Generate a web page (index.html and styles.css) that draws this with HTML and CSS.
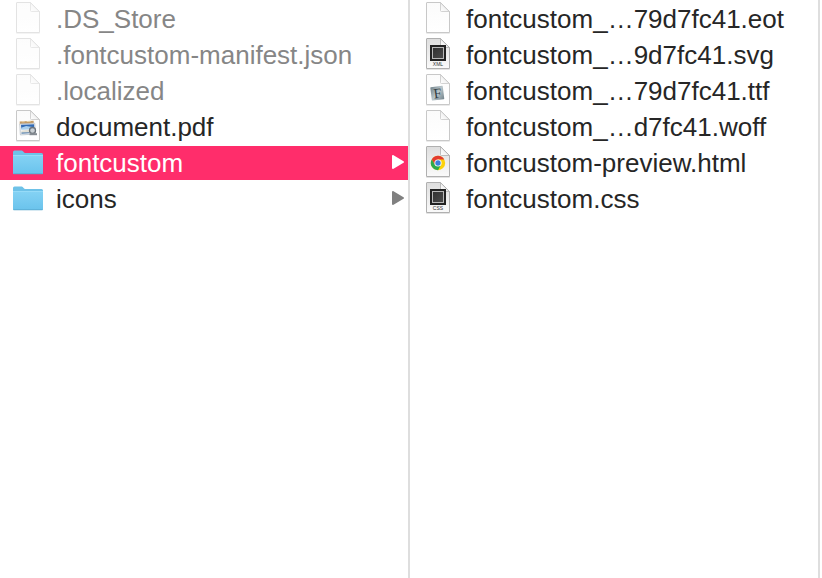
FILE: index.html
```html
<!DOCTYPE html>
<html lang="en">
<head>
    <meta charset="UTF-8">
    <meta name="viewport" content="width=device-width, initial-scale=1.0">
    <title>fontcustom</title>
    <link rel="stylesheet" href="styles.css">
</head>
<body>
    <!-- Shared icon shapes -->
    <svg class="icon-defs" width="0" height="0" aria-hidden="true">
        <defs>
            <linearGradient id="paper" x1="0" y1="0" x2="0" y2="1">
                <stop offset="0" stop-color="#fbfbfb"/>
                <stop offset="1" stop-color="#ffffff"/>
            </linearGradient>
            <linearGradient id="grayPaper" x1="0" y1="0" x2="0" y2="1">
                <stop offset="0" stop-color="#dedede"/>
                <stop offset="1" stop-color="#fafafa"/>
            </linearGradient>
            <linearGradient id="fold" x1="0" y1="1" x2="1" y2="0">
                <stop offset="0" stop-color="#ffffff"/>
                <stop offset="0.4" stop-color="#f4f4f4"/>
                <stop offset="0.5" stop-color="#d8d8d8"/>
                <stop offset="0.6" stop-color="#ffffff"/>
            </linearGradient>
            <linearGradient id="folderFront" x1="0" y1="0" x2="0" y2="1">
                <stop offset="0" stop-color="#84d2f4"/>
                <stop offset="1" stop-color="#6ac3ec"/>
            </linearGradient>
            <linearGradient id="plate" x1="0" y1="0" x2="1" y2="1">
                <stop offset="0" stop-color="#6f8088"/>
                <stop offset="0.5" stop-color="#b9c6cb"/>
                <stop offset="1" stop-color="#71828a"/>
            </linearGradient>
            <linearGradient id="screen" x1="0" y1="0" x2="1" y2="1">
                <stop offset="0" stop-color="#303030"/>
                <stop offset="1" stop-color="#4b4b4b"/>
            </linearGradient>
        </defs>
        <symbol id="file" viewBox="0 0 32 34">
            <path d="M4.5 1.5h14l9 9v20.7h-23z" fill="none" stroke="#000" stroke-opacity=".12"/>
            <path d="M5 .5h13.5l9 9V30a.5.5 0 0 1-.5.5H5a.5.5 0 0 1-.5-.5V1A.5.5 0 0 1 5 .5z" fill="url(#paper)" stroke="#c8c8c8"/>
            <path d="M18.5 .5v8a1 1 0 0 0 1 1h8z" fill="url(#fold)" stroke="#c8c8c8" stroke-width=".8"/>
        </symbol>
        <symbol id="code" viewBox="0 0 32 34">
            <path d="M4.5 1.5h14l9 9v20.7h-23z" fill="none" stroke="#000" stroke-opacity=".16"/>
            <path d="M5 .5h13.5l9 9V30a.5.5 0 0 1-.5.5H5a.5.5 0 0 1-.5-.5V1A.5.5 0 0 1 5 .5z" fill="url(#grayPaper)" stroke="#b0b0b0"/>
            <path d="M18.5 .5v8a1 1 0 0 0 1 1h8z" fill="url(#fold)" stroke="#b0b0b0" stroke-width=".8"/>
            <rect x="8" y="7" width="16" height="16" fill="#222"/>
            <rect x="10.5" y="9.5" width="11" height="11" fill="url(#screen)" stroke="#b8b8b8"/>
        </symbol>
        <symbol id="folder" viewBox="0 0 32 34">
            <path d="M1 6a1.500 1.500 0 0 1 1.500-1.500h7.300c1.500 0 1.700 2.500 3.200 2.500h16.500A1.500 1.500 0 0 1 31 8.500V27a1 1 0 0 1-1 1H2a1 1 0 0 1-1-1z" fill="#6ec2e8"/>
            <path d="M1 9.500h30v17.500a1 1 0 0 1-1 1H2a1 1 0 0 1-1-1z" fill="url(#folderFront)"/>
            <path d="M1 9.500h30" stroke="#96dbf8" stroke-width="1"/>
            <path d="M1.500 27.800h29" stroke="#56a6cc" stroke-width=".8"/>
        </symbol>
        <symbol id="arrow" viewBox="0 0 12 14">
            <path d="M1 1v12L11 7z" fill="currentColor" stroke="currentColor" stroke-width="2" stroke-linejoin="round"/>
        </symbol>
    </svg>

    <main class="browser">
        <ul class="column">
            <li>
                <a class="item hidden-file" href="#ds-store">
                    <svg class="icon"><use href="#file"/></svg>
                    <span class="name">.DS_Store</span>
                </a>
            </li>
            <li>
                <a class="item hidden-file" href="#manifest">
                    <svg class="icon"><use href="#file"/></svg>
                    <span class="name">.fontcustom-manifest.json</span>
                </a>
            </li>
            <li>
                <a class="item hidden-file" href="#localized">
                    <svg class="icon"><use href="#file"/></svg>
                    <span class="name">.localized</span>
                </a>
            </li>
            <li>
                <a class="item" href="#document">
                    <svg class="icon" viewBox="0 0 32 34">
                        <use href="#file"/>
                        <g transform="rotate(-3 16 18)">
                            <rect x="8" y="11" width="14" height="3" fill="#c39a63"/>
                            <path d="M10 11.500h3M15 11.500h4" stroke="#e9d5ad"/>
                            <rect x="8" y="13.500" width="15" height="11" fill="#f4f6f8" stroke="#b4bac1" stroke-width=".7"/>
                            <path d="M9.200 14.500h13v4h-13z" fill="#326bb5"/>
                            <path d="M9.200 17.500l5-1.500 8 1.500v2h-13z" fill="#a8cfee"/>
                            <path d="M9.200 20.500l6-.8 7 1v2.300h-13z" fill="#e4e1d6"/>
                            <path d="M9.200 22.800h8" stroke="#5681ae" stroke-width="1.200"/>
                        </g>
                        <circle cx="20.500" cy="20.500" r="3" fill="#c5ccd3" fill-opacity=".85" stroke="#6c737b" stroke-width="1.300"/>
                        <path d="M17.500 23.200h7.500v2h-7.500z" fill="#858b92"/>
                    </svg>
                    <span class="name">document.pdf</span>
                </a>
            </li>
            <li>
                <a class="item selected" href="#fontcustom" aria-current="true">
                    <svg class="icon"><use href="#folder"/></svg>
                    <span class="name">fontcustom</span>
                    <svg class="arrow"><use href="#arrow"/></svg>
                </a>
            </li>
            <li>
                <a class="item" href="#icons">
                    <svg class="icon"><use href="#folder"/></svg>
                    <span class="name">icons</span>
                    <svg class="arrow"><use href="#arrow"/></svg>
                </a>
            </li>
        </ul>

        <ul class="column">
            <li>
                <a class="item" href="#eot">
                    <svg class="icon"><use href="#file"/></svg>
                    <span class="name">fontcustom_…79d7fc41.eot</span>
                </a>
            </li>
            <li>
                <a class="item" href="#svg">
                    <svg class="icon" viewBox="0 0 32 34">
                        <use href="#code"/>
                        <text class="icon-label" x="16" y="28" text-anchor="middle">XML</text>
                    </svg>
                    <span class="name">fontcustom_…9d7fc41.svg</span>
                </a>
            </li>
            <li>
                <a class="item" href="#ttf">
                    <svg class="icon" viewBox="0 0 32 34">
                        <use href="#file"/>
                        <g transform="rotate(-7 15 19)">
                            <rect x="9" y="12.500" width="12.500" height="13.500" rx=".6" fill="url(#plate)"/>
                            <text class="icon-letter" x="15.500" y="24" text-anchor="middle">F</text>
                        </g>
                    </svg>
                    <span class="name">fontcustom_…79d7fc41.ttf</span>
                </a>
            </li>
            <li>
                <a class="item" href="#woff">
                    <svg class="icon"><use href="#file"/></svg>
                    <span class="name">fontcustom_…d7fc41.woff</span>
                </a>
            </li>
            <li>
                <a class="item" href="#preview">
                    <svg class="icon" viewBox="0 0 32 34">
                        <path d="M4.5 1.5h14l9 9v20.7h-23z" fill="none" stroke="#000" stroke-opacity=".16"/>
                        <path d="M5 .5h13.5l9 9V30a.5.5 0 0 1-.5.5H5a.5.5 0 0 1-.5-.5V1A.5.5 0 0 1 5 .5z" fill="url(#grayPaper)" stroke="#b0b0b0"/>
                        <path d="M18.5 .5v8a1 1 0 0 0 1 1h8z" fill="url(#fold)" stroke="#b0b0b0" stroke-width=".8"/>
                        <circle cx="16" cy="17" r="7.200" fill="#fcd20b"/>
                        <path d="M9.760 13.400A7.200 7.200 0 0 1 22.240 13.400H16L12.880 18.800z" fill="#e33b2e"/>
                        <path d="M9.760 13.400A7.200 7.200 0 0 0 16 24.200L19.120 18.800 16 17 12.880 18.800z" fill="#2da94f"/>
                        <circle cx="16" cy="17" r="3.600" fill="#fff"/>
                        <circle cx="16" cy="17" r="2.700" fill="#3d7fdc"/>
                    </svg>
                    <span class="name">fontcustom-preview.html</span>
                </a>
            </li>
            <li>
                <a class="item" href="#css">
                    <svg class="icon" viewBox="0 0 32 34">
                        <use href="#code"/>
                        <text class="icon-label" x="16" y="28" text-anchor="middle">CSS</text>
                    </svg>
                    <span class="name">fontcustom.css</span>
                </a>
            </li>
        </ul>
    </main>
</body>
</html>
```
FILE: styles.css
```css
/* General Styles */
* {
    box-sizing: border-box;
}

body {
    margin: 0;
    background-color: #fff;
    color: #262626;
    font-family: "Liberation Sans", Arial, sans-serif;
    font-size: 26px;
    line-height: 34px;
}

.icon-defs {
    position: absolute;
}

/* Column View */
.browser {
    display: grid;
    grid-template-columns: 1fr 1fr;
    min-height: 100vh;
    padding-right: 2px;
}

.column {
    display: flex;
    flex-direction: column;
    gap: 2px;
    min-width: 0;
    margin: 0;
    padding: 2px 0 0;
    list-style: none;
    border-right: 2px solid #dedede;
}

/* Rows */
.item {
    display: flex;
    align-items: center;
    gap: 12px;
    height: 34px;
    padding: 0 4px 0 12px;
    color: inherit;
    text-decoration: none;
}

.icon {
    flex: none;
    width: 32px;
    height: 34px;
}

.name {
    flex: 1;
    min-width: 0;
    overflow: hidden;
    white-space: nowrap;
}

.arrow {
    flex: none;
    width: 12px;
    height: 14px;
    margin-bottom: 2px;
    color: #808080;
}

/* Row States */
.hidden-file {
    color: #868686;
}

.hidden-file .icon {
    opacity: 0.5;
}

.selected {
    background-color: #ff2d6b;
    color: #fff;
}

.selected .arrow {
    color: #fff;
}

/* Text inside icons */
.icon-label {
    font-size: 5px;
    fill: #333;
}

.icon-letter {
    font-family: "Liberation Serif", serif;
    font-size: 14px;
    fill: #2f3a40;
}
```
